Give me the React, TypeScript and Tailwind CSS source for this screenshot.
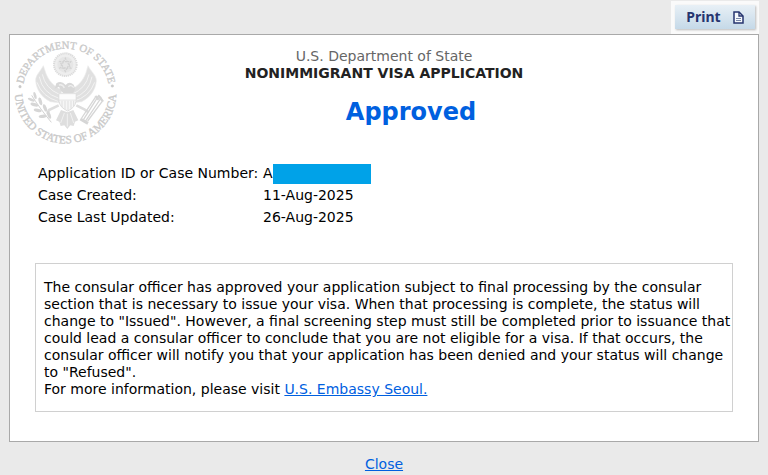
import React, { FC } from "react";

const details = [
  { label: "Case Created:", value: "11-Aug-2025" },
  { label: "Case Last Updated:", value: "26-Aug-2025" },
]

const Seal: FC = () => {
  return <svg viewBox="45 39 306 306" className="w-[102px] h-[102px] overflow-visible" role="img" aria-label="Department of State seal">
    <defs>
      <path id="topArc" d="M 68 192 A 130 130 0 0 1 328 192" />
      <path id="bottomArc" d="M 47 170 A 152 152 0 1 0 347 170" />
    </defs>
    <g fill="#c9c9c9" stroke="#c9c9c9" strokeWidth="1" fontFamily="'Liberation Serif', serif" textAnchor="middle">
      <text fontSize="32"><textPath href="#topArc" startOffset="50%">DEPARTMENT OF STATE</textPath></text>
      <text fontSize="34"><textPath href="#bottomArc" startOffset="50%">UNITED STATES OF AMERICA</textPath></text>
      <circle cx="60" cy="176" r="4" />
      <circle cx="337" cy="174" r="4" />
    </g>

    {/* glory with stars */}
    <circle cx="196" cy="110" r="34" fill="#eeeeee" stroke="#dcdcdc" strokeWidth="6" strokeDasharray="4 2" />
    <circle cx="196" cy="110" r="24" fill="#e6e6e6" />
    <path d="M196 91 L212 120 H180 Z M196 130 L180 101 H212 Z" fill="none" stroke="#d2d2d2" strokeWidth="4" strokeDasharray="5 3" />

    {/* wings */}
    <g fill="#e0e0e0" stroke="#ececec" strokeWidth="2">
      <path d="M130 113 C120 132 107 140 107 158 C109 183 123 207 151 221 L184 225 L184 184 C162 176 145 157 137 134 Z" />
      <path d="M264 113 C274 132 288 140 289 158 C287 183 273 207 245 221 L212 225 L212 184 C233 176 250 157 258 134 Z" />
    </g>
    <g fill="none" stroke="#f3f3f3" strokeWidth="3">
      <path d="M127 139 Q136 181 178 199 M118 146 Q127 195 177 211 M111 163 Q127 207 174 220" />
      <path d="M267 139 Q258 181 216 199 M276 146 Q268 195 218 211 M284 163 Q268 207 220 220" />
    </g>

    {/* head, neck and shield */}
    <path d="M169 166 L164 182 L177 176 Q181 190 192 197 L216 197 Q230 185 221 170 Q208 158 197 171 Q184 156 169 166 Z" fill="#d8d8d8" />
    <path d="M177 171 Q188 168 193 180 M205 176 Q213 168 221 179" fill="none" stroke="#eeeeee" strokeWidth="4" />
    <path d="M177 197 H228 V220 Q225 239 203 249 Q180 239 177 220 Z" fill="#f6f6f6" stroke="#dedede" strokeWidth="3" />
    <path d="M177 197 H228 V216 H177 Z" fill="#fcfcfc" stroke="#dedede" strokeWidth="2" />
    <path d="M186 218 V238 M195 218 V244 M204 218 V246 M213 218 V242 M221 218 V235" stroke="#dedede" strokeWidth="3" />

    {/* legs and tail */}
    <path d="M176 232 L147 246 L142 258 M229 232 L253 244 L266 253" fill="none" stroke="#dedede" strokeWidth="8" />
    <path d="M183 246 L168 277 L178 281 L182 294 L193 292 L202 303 L211 292 L221 294 L225 281 L235 277 L220 246 L202 253 Z" fill="#dedede" />
    <path d="M193 255 L182 285 M202 257 V296 M211 255 L221 285" stroke="#f1f1f1" strokeWidth="3" />

    {/* olive branch */}
    <path d="M95 202 Q117 238 154 283" fill="none" stroke="#d3d3d3" strokeWidth="3" />
    <g fill="#d6d6d6">
      <ellipse cx="94" cy="215" rx="11" ry="4" transform="rotate(22 94 215)" />
      <ellipse cx="105" cy="203" rx="11" ry="4" transform="rotate(75 105 203)" />
      <ellipse cx="103" cy="230" rx="12" ry="5" transform="rotate(17 103 230)" />
      <ellipse cx="121" cy="220" rx="12" ry="5" transform="rotate(75 121 220)" />
      <ellipse cx="113" cy="247" rx="12" ry="5" transform="rotate(12 113 247)" />
      <ellipse cx="135" cy="240" rx="12" ry="5" transform="rotate(70 135 240)" />
      <ellipse cx="128" cy="265" rx="12" ry="5" transform="rotate(-5 128 265)" />
      <ellipse cx="147" cy="261" rx="12" ry="5" transform="rotate(70 147 261)" />
    </g>

    {/* arrows */}
    <g stroke="#d6d6d6" strokeWidth="4">
      <path d="M249 277 L294 206 M256 280 L301 213 M245 270 L286 208 M263 279 L306 221" />
      <path d="M294 202 L303 211 M286 204 L296 215 M301 210 L309 221" strokeWidth="7" />
      <path d="M241 273 L264 286" strokeWidth="9" />
    </g>
  </svg>
}

const PrintIcon: FC = () => {
  return <svg viewBox="0 0 11 13" className="w-[11px] h-[13px]" fill="none" stroke="#26356f" aria-hidden="true">
    <path d="M1 1 H6 L10 5 V12 H1 Z" fill="#f5f9fc" strokeWidth="1.5" />
    <path d="M6 1 V5 H10" strokeWidth="1.3" />
    <path d="M3 7.5 H8 M3 9.5 H8" strokeWidth="1" stroke="#7886a8" />
  </svg>
}

const App: FC = () => {
  return <div
    className="min-h-screen bg-[#eaeaea] px-[9px] pt-px text-sm leading-[17px] text-black"
    style={{ fontFamily: "Verdana, 'DejaVu Sans', sans-serif" }}
  >
    <div className="flex justify-end">
      <div className="bg-[#fafafa] px-1 pt-1 pb-[5px]">
        <button
          type="button"
          onClick={() => window.print()}
          className="flex h-6 w-20 items-center justify-center gap-3 bg-linear-to-b from-[#e8f0f6] to-[#c5d9e8] font-['Noto_Sans'] text-sm font-bold text-[#26356f] shadow-[1px_1px_2px_#bbbbbb]"
        >
          Print
          <PrintIcon />
        </button>
      </div>
    </div>

    <main className="border border-[#a9a9a9] bg-white pb-[29px]">
      <header className="grid grid-cols-[102px_1fr_102px] px-[5px] pt-1.5">
        <Seal />
        <div className="pt-[7px] text-center">
          <p className="text-[#666666]">U.S. Department of State</p>
          <p className="font-bold text-[#222222]">NONIMMIGRANT VISA APPLICATION</p>
          <h1 className="mt-3.5 pl-[54px] text-2xl leading-8 font-bold text-[#0060df]">Approved</h1>
        </div>
      </header>

      <table className="mt-5 ml-7">
        <tbody>
          <tr className="h-[21px]">
            <th scope="row" className="w-[225px] text-left font-normal whitespace-nowrap">Application ID or Case Number:</th>
            <td>
              <span className="flex items-center">A<span className="h-5 w-[98px] bg-[#00a2e8]" /></span>
            </td>
          </tr>
          {details.map((item) => (
            <tr key={item.label} className="h-[22px]">
              <th scope="row" className="text-left font-normal">{item.label}</th>
              <td>{item.value}</td>
            </tr>
          ))}
        </tbody>
      </table>

      <section className="mx-[25px] mt-[35px] border border-[#d0d0d0] pt-[15px] pb-[13px] pl-2">
        <p>
          The consular officer has approved your application subject to final processing by the consular
          section that is necessary to issue your visa. When that processing is complete, the status will
          change to "Issued". However, a final screening step must still be completed prior to issuance that
          could lead a consular officer to conclude that you are not eligible for a visa. If that occurs, the
          consular officer will notify you that your application has been denied and your status will change
          to "Refused".
        </p>
        <p>
          For more information, please visit <a href="#embassy" className="text-[#0060df] underline">U.S. Embassy Seoul.</a>
        </p>
      </section>
    </main>

    <footer className="pt-3.5 text-center">
      <a href="#close" className="text-[#0060df] underline">Close</a>
    </footer>
  </div>
}

export default App
